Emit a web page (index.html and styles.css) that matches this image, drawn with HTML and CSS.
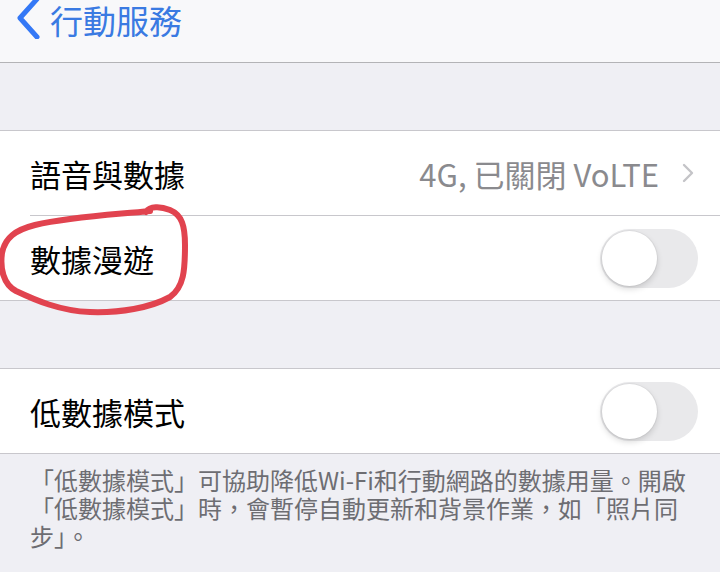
FILE: index.html
```html
<!DOCTYPE html>
<html lang="zh-Hant">

<head>
  <meta charset="UTF-8" />
  <meta name="viewport" content="width=device-width, initial-scale=1.0" />
  <title>行動服務</title>
  <link rel="stylesheet" href="styles.css">
</head>

<body>

  <header class="barra">
    <svg class="voltar" width="30" height="40" viewBox="0 0 30 40">
      <path d="M26 0 L9 19 L26 38" fill="none" stroke="#3478f6" stroke-width="5" stroke-linecap="round" stroke-linejoin="round" />
    </svg>
    <h1>行動服務</h1>
  </header>

  <div class="espaco"></div>

  <!-- Grupo principal -->
  <div class="grupo">
    <div class="linha">
      <div class="linha-conteudo">
        <span class="rotulo">語音與數據</span>
        <span class="detalhe">4G, 已關閉 VoLTE</span>
        <svg class="seta" width="14" height="20" viewBox="0 0 14 20">
          <path d="M3 2 L11 10 L3 18" fill="none" stroke="#c4c4c8" stroke-width="2.4" stroke-linecap="round" stroke-linejoin="round" />
        </svg>
      </div>
    </div>
    <div class="linha">
      <div class="linha-conteudo">
        <span class="rotulo">數據漫遊</span>
        <div class="chave"><div class="botao"></div></div>
      </div>
    </div>
  </div>

  <div class="espaco"></div>

  <div class="grupo">
    <div class="linha">
      <div class="linha-conteudo">
        <span class="rotulo">低數據模式</span>
        <div class="chave"><div class="botao"></div></div>
      </div>
    </div>
  </div>

  <p class="rodape">「低數據模式」可協助降低Wi-Fi和行動網路的數據用量。開啟「低數據模式」時，會暫停自動更新和背景作業，如「照片同步」。</p>

  <!-- Marcação vermelha feita à mão -->
  <svg class="marcacao" width="200" height="125" viewBox="0 0 200 125">
    <path d="M146 17 C150 11 160 11 170 15 C182 20 185 31 185 50 C185 75 184 92 170 102 C150 113 120 118 90 117 C60 116 35 105 16 96 C3 89 0 73 2 58 C5 43 15 35 35 30 C70 22 110 20 150 16"
      fill="none" stroke="#e1434f" stroke-width="6" stroke-linecap="round" stroke-linejoin="round" />
  </svg>

</body>

</html>
```

FILE: styles.css
```css
:root {
  --fundo: #efeff4;
  --cartao: #ffffff;
  --linha: #c8c7cc;
  --azul: #3478f6;
  --cinza-texto: #6d6d72;
}

body {
  margin: 0;
  position: relative;
  font-family: "Noto Sans CJK TC", "Noto Sans", sans-serif;
  background-color: var(--fundo);
  color: #000;
  overflow: hidden;
}

.barra {
  height: 62px;
  display: flex;
  align-items: flex-start;
  background-color: #f8f8fa;
  border-bottom: 1px solid #b3b3b6;
  box-sizing: content-box;
}

.voltar {
  margin-left: 11px;
  margin-top: -1px;
}

.barra h1 {
  margin: 0 0 0 9px;
  font-size: 33px;
  font-weight: 400;
  line-height: 40px;
  color: #3a7ae2;
}

.espaco {
  height: 67px;
}

.grupo {
  background-color: var(--cartao);
  border-top: 1px solid var(--linha);
  border-bottom: 1px solid var(--linha);
}

.linha {
  padding-left: 30px;
}

.linha-conteudo {
  height: 84px;
  display: flex;
  align-items: center;
  padding-right: 22px;
  border-bottom: 1px solid var(--linha);
}

.linha:last-child .linha-conteudo {
  border-bottom: none;
}

.rotulo {
  font-size: 31px;
  flex: 1;
}

.detalhe {
  font-size: 31px;
  color: #8a8a8e;
  margin-right: 22px;
}

.seta {
  margin-right: 3px;
}

.chave {
  width: 98px;
  height: 59px;
  border-radius: 30px;
  background-color: #e9e9eb;
  position: relative;
}

.botao {
  position: absolute;
  top: 2px;
  left: 2px;
  width: 55px;
  height: 55px;
  border-radius: 50%;
  background-color: white;
  box-shadow: 0 3px 6px rgba(0, 0, 0, 0.15), 0 0 0 1px rgba(0, 0, 0, 0.04);
}

.rodape {
  margin: 0;
  padding: 12px 24px 20px 30px;
  font-size: 24px;
  line-height: 28px;
  color: var(--cinza-texto);
}

.marcacao {
  position: absolute;
  left: 0;
  top: 195px;
}
```
